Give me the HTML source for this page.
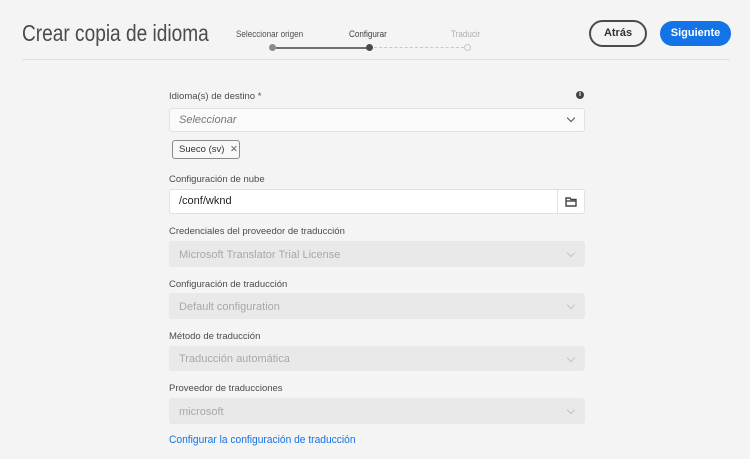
<!DOCTYPE html>
<html><head><style>
body{margin:0;width:750px;height:459px;background:#f4f4f4;font-family:"Liberation Sans",sans-serif;position:relative;overflow:hidden}
.a{position:absolute;white-space:nowrap}
.lbl{position:absolute;left:169px;font-size:9.5px;color:#4b4b4b;white-space:nowrap}
.f{position:absolute;left:169px;width:416px;height:24px;border:1px solid #e1e1e1;border-radius:3px;box-sizing:border-box;background:#fafafa;font-size:11px;line-height:22px;padding-left:9px;color:#333;white-space:nowrap}
.d{background:#e9e9e9;border-color:#e9e9e9;color:#a8a8a8}
.ch{position:absolute;right:10px;top:6px;width:5px;height:5px;border-right:1.5px solid #505050;border-bottom:1.5px solid #505050;transform:rotate(45deg)}
.d .ch{border-color:#c4c4c4}
.sq{display:inline-block;transform:scaleX(.9);transform-origin:left}
</style></head><body>
<div class="a" style="left:22px;top:20px;font-size:23px;color:#4b4b4b;transform:scaleX(.83);transform-origin:left">Crear copia de idioma</div>
<div class="a" style="left:236px;top:29px;font-size:9px;color:#505050;transform:scaleX(.9);transform-origin:left">Seleccionar origen</div>
<div class="a" style="left:349px;top:29px;font-size:9px;color:#404040;transform:scaleX(.9);transform-origin:left">Configurar</div>
<div class="a" style="left:451px;top:29px;font-size:9px;color:#b0b0b0;transform:scaleX(.9);transform-origin:left">Traducir</div>
<div class="a" style="left:269px;top:44px;width:7px;height:7px;border-radius:50%;background:#8a8a8a"></div>
<div class="a" style="left:276px;top:47px;width:92px;height:1.5px;background:#707070"></div>
<div class="a" style="left:366px;top:44px;width:7px;height:7px;border-radius:50%;background:#4b4b4b"></div>
<div class="a" style="left:374px;top:47px;width:90px;border-top:1.5px dashed #c8c8c8"></div>
<div class="a" style="left:464px;top:44px;width:5px;height:5px;border-radius:50%;border:1px solid #c8c8c8"></div>
<div class="a" style="left:589px;top:20px;width:58px;height:27px;border:2px solid #4b4b4b;border-radius:14px;box-sizing:border-box;font-size:11px;font-weight:bold;color:#333;text-align:center;line-height:23px">Atrás</div>
<div class="a" style="left:660px;top:21px;width:71px;height:25px;background:#1473e6;border-radius:14px;font-size:11px;font-weight:bold;color:#fff;text-align:center;line-height:25px">Siguiente</div>
<div class="a" style="left:22px;top:59px;width:708px;height:1px;background:#e2e2e2"></div>

<div class="lbl" style="top:91px">Idioma(s) de destino *</div>
<div class="a" style="left:576px;top:91px;width:8px;height:8px;border-radius:50%;background:#444;color:#fff;font-size:7px;font-weight:bold;text-align:center;line-height:8px">i</div>
<div class="f" style="top:108px;color:#777;font-style:italic">Seleccionar<span class="ch"></span></div>
<div class="a" style="left:172px;top:140px;width:68px;height:19px;border:1px solid #8a8a8a;border-radius:3px;box-sizing:border-box;font-size:9.5px;line-height:17px;padding-left:6px;color:#333;background:#f8f8f8">Sueco (sv) <span style="margin-left:3px;color:#666">✕</span></div>
<div class="lbl" style="top:174px">Configuración de nube</div>
<div class="f" style="top:189px;height:25px;background:#fff;color:#222;line-height:23px">/conf/wknd<div class="a" style="right:0;top:0;width:26px;height:23px;border-left:1px solid #e1e1e1">
<svg width="12" height="10" style="position:absolute;left:7px;top:7px" viewBox="0 0 12 10"><path d="M1 1h4l1 1.5h5V9H1z" fill="none" stroke="#444" stroke-width="1.4"/><path d="M1 4h10" stroke="#444" stroke-width="1.4"/></svg></div></div>
<div class="lbl" style="top:226px">Credenciales del proveedor de traducción</div>
<div class="f d" style="top:241px;height:26px;line-height:26px">Microsoft Translator Trial License<span class="ch" style="top:8px"></span></div>
<div class="lbl" style="top:279px">Configuración de traducción</div>
<div class="f d" style="top:293px;height:26px;line-height:26px">Default configuration<span class="ch" style="top:8px"></span></div>
<div class="lbl" style="top:331px">Método de traducción</div>
<div class="f d" style="top:346px;height:25px;line-height:25px">Traducción automática<span class="ch" style="top:8px"></span></div>
<div class="lbl" style="top:383px">Proveedor de traducciones</div>
<div class="f d" style="top:398px;height:26px;line-height:26px">microsoft<span class="ch" style="top:8px"></span></div>
<div class="a" style="left:169px;top:434px;font-size:11px;color:#1473e6;transform:scaleX(.93);transform-origin:left">Configurar la configuración de traducción</div>
</body></html>
